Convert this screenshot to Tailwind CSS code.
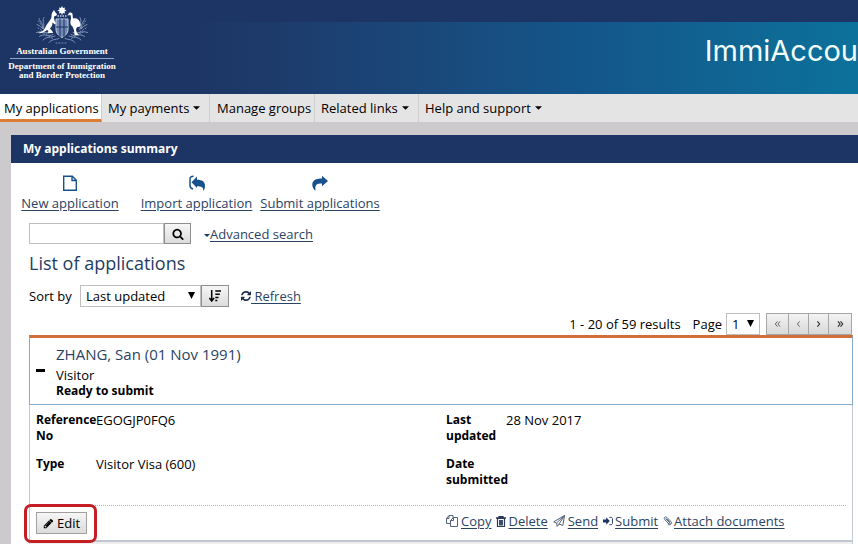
<!DOCTYPE html>
<html lang="en">
<head>
<meta charset="utf-8">
<meta name="viewport" content="width=device-width, initial-scale=1">
<title>My applications summary</title>
<script src="https://cdn.jsdelivr.net/npm/@tailwindcss/browser@4"></script>
</head>
<body class="min-h-screen overflow-x-hidden bg-[#cccacc] font-['Open_Sans',sans-serif] text-[13px] leading-4 text-black">
<header class="flex h-[94px] items-start justify-between bg-[#1d3564]">
  <div class="z-10 flex w-[124px] shrink-0 flex-col items-center pt-[6px] font-['Liberation_Serif',serif] font-bold text-white">
    <svg class="h-[38px] w-[52px]" viewBox="0 0 104 76" fill="none" aria-label="Coat of arms" role="img">
      <g stroke="#7f93ba" stroke-width="2" stroke-linecap="round">
        <path d="M6 25c3 8 9 10 7 20M2 37c7 2 8 8 15 9M16 23c-5 7 2 12-1 21M1 53c12-5 17 4 29 0M7 61c9-8 18 2 27-4M14 68c8-8 14-4 24-8M26 73c6-7 12-5 20-8M98 25c-3 8-9 10-7 20M102 37c-7 2-8 8-15 9M88 23c5 7-2 12 1 21M103 53c-12-5-17 4-29 0M97 61c-9-8-18 2-27-4M90 68c-8-8-14-4-24-8M78 73c-6-7-12-5-20-8"/>
        <path stroke-dasharray="2 4" d="M5 30l12 18M10 52l25 14M99 30L87 48M94 52L69 66M4 44l20 12M100 44L80 56M40 74h24"/>
      </g>
      <path d="M52 0l2 4 4-1-1 4 4 2-4 2 1 4-4-1-2 4-2-4-4 1 1-4-4-2 4-2-1-4 4 1z" fill="#fff"/>
      <path d="M43 20h18" stroke="#cbd5e6" stroke-width="3" stroke-dasharray="3 2"/>
      <path d="M40 26h24v20c0 9-6 14-12 17-6-3-12-8-12-17z" fill="#7288b4" stroke="#c3cee2" stroke-width="2"/>
      <path d="M40 42h24M48 26v36M56 26v36" stroke="#1d3564" stroke-width="2"/>
      <path d="M36 8l3 5 3 3-1 3-5 2c0 6 1 10 4 13l-2 3-5-4c0 6-2 9-5 12l5 6 1 3H23l2-4-3-2c-6 5-10 7-19 6 9-2 13-5 16-12 3-8 9-11 12-19 0-5 0-9 3-12z" fill="#fff"/>
      <path d="M65 16c0-3 4-4 7-2 2 2 1 7 2 11 7-2 13 2 15 11 1 4-2 7-6 6-2 2-3 3-3 6l2 6 4 4h-9l-1-10-3-7c-5-3-5-9-3-15 0-3 0-5-1-8l-6 1z" fill="#fff"/>
    </svg>
    <p class="mt-[1px] text-[9px] leading-3">Australian Government</p>
    <div class="mt-[1px] mb-[3px] h-px w-[104px] bg-[#8ea4c8]"></div>
    <p class="text-center text-[9px] leading-[9px]">Department of Immigration<br>and Border Protection</p>
  </div>
  <div class="mt-[22px] flex h-[72px] flex-1 justify-end overflow-hidden bg-linear-to-r from-[#1d3564] from-10% via-[#145488] via-60% to-[#0b729b] pt-2">
    <h1 class="whitespace-nowrap font-['Inter',sans-serif] text-[29px] leading-[42px] text-[#f2ffff]">ImmiAccou</h1>
  </div>
</header>

<nav class="flex h-7 bg-[#e5e4e5] leading-7" aria-label="Main">
  <a href="#" class="w-[102px] whitespace-nowrap border-r border-b-3 border-r-[#cfcfcf] border-b-[#dc7d35] bg-white pl-1">My applications</a>
  <a href="#" class="flex w-[108px] items-center gap-1 whitespace-nowrap border-r border-[#cfcfcf] pl-[6px]">My payments<svg class="h-1 w-[7px]" viewBox="0 0 8 4"><path d="M0 0h8L4 4z"/></svg></a>
  <a href="#" class="w-[105px] whitespace-nowrap border-r border-[#cfcfcf] pl-[7px]">Manage groups</a>
  <a href="#" class="flex w-[104px] items-center gap-1 whitespace-nowrap border-r border-[#cfcfcf] pl-[6px]">Related links<svg class="h-1 w-[7px]" viewBox="0 0 8 4"><path d="M0 0h8L4 4z"/></svg></a>
  <a href="#" class="flex items-center gap-1 whitespace-nowrap pl-[6px]">Help and support<svg class="h-1 w-[7px]" viewBox="0 0 8 4"><path d="M0 0h8L4 4z"/></svg></a>
</nav>

<main class="mt-[13px] ml-[11px] bg-white">
  <h2 class="h-7 bg-[#1d3564] pl-3 text-[12px] leading-7 font-bold text-white">My applications summary</h2>

  <div class="grid grid-cols-[94px_107px_114px] gap-x-[13px] pt-3 pl-3 leading-5 whitespace-nowrap text-[#2b4363]">
    <a href="#" class="flex flex-col items-center gap-[2px] underline underline-offset-2">
      <svg class="size-4" viewBox="0 0 16 16" fill="none" stroke="#17528c" stroke-width="1.4"><path d="M1.700 1.200h8.600l4 4v10H1.700z M10 1.200v4.300h4.300"/></svg>New application</a>
    <a href="#" class="ml-[13px] flex w-[107px] flex-col items-center gap-[2px] underline underline-offset-2">
      <svg class="size-4" viewBox="0 0 16 16"><path d="M4.500 1.200C2 1.200 1 2 1 4v6.500c0 2 1 3 3 3.500" fill="none" stroke="#17528c" stroke-width="1.500"/><path d="M8 1.500v3.200c5.500 0 8 2 8 6.300 0 1.700-.5 3.300-1.300 4.500-.3.300-.6.200-.5-.2.200-3-1.500-4-6.200-4V13L2.500 7.200z" fill="#17528c"/></svg>Import application</a>
    <a href="#" class="ml-[13px] flex w-[114px] flex-col items-center gap-[2px] underline underline-offset-2">
      <svg class="size-4" viewBox="0 0 16 16" fill="#17528c"><path d="M10 .8L16 6l-6 5.200V8.500C5.500 8.200 3.300 9.500 3.300 13c0 .8.100 1.300.2 2 0 .6-.5.700-.8.200C1.300 13.500.3 12 .3 9.700.3 5.500 3.500 3.500 10 3.500z"/></svg>Submit applications</a>
  </div>

  <div class="px-[18px]">
    <form class="mt-[10px] flex h-[21px] items-stretch" role="search">
      <input type="text" aria-label="Search applications" class="w-[135px] border border-[#bfbfbf] bg-white px-1 outline-none">
      <button type="button" aria-label="Search" class="flex w-[27px] items-center justify-center border border-[#8e8e8e] bg-linear-to-b from-[#f6f6f6] to-[#dcdcdc]">
        <svg class="size-3" viewBox="0 0 1792 1792"><path d="M1216 832q0-185-131.500-316.500t-316.500-131.500-316.500 131.500-131.500 316.500 131.500 316.500 316.500 131.500 316.500-131.500 131.500-316.500zm512 832q0 52-38 90t-90 38q-54 0-90-38l-343-342q-179 124-399 124-143 0-273.500-55.500t-225-150-150-225-55.500-273.500 55.500-273.500 150-225 225-150 273.500-55.500 273.500 55.500 225 150 150 225 55.500 273.500q0 220-124 399l343 343q37 37 37 90z"/></svg>
      </button>
      <a href="#" class="ml-[13px] flex items-center whitespace-nowrap text-[#2b4363] underline underline-offset-2"><svg class="mt-1 h-[3px] w-[6px]" viewBox="0 0 6 3" fill="#1d3564"><path d="M0 0h6L3 3z"/></svg>Advanced search</a>
    </form>

    <h3 class="mt-[5px] text-[18px] leading-7 text-[#1f3d63]">List of applications</h3>

    <div class="mt-2 flex h-[22px] items-stretch">
      <label for="sort" class="w-[51px] leading-[22px]">Sort by</label>
      <div class="relative flex w-[121px]">
        <select id="sort" class="w-full appearance-none border border-[#bfbfbf] bg-white pl-[5px] outline-none"><option>Last updated</option></select>
        <svg class="pointer-events-none absolute top-[7px] right-[6px] h-[7px] w-[7px]" viewBox="0 0 7 7"><path d="M0 0h7L3.500 7z"/></svg>
      </div>
      <button type="button" aria-label="Sort order" class="flex w-7 items-center justify-center border border-[#8e8e8e] bg-linear-to-b from-[#f6f6f6] to-[#dcdcdc]">
        <svg class="size-3" viewBox="0 0 12 12" fill="none" stroke="#000" stroke-width="1.500"><path d="M2.700 0v10.500M.3 8l2.400 3L5.100 8M6.300 1h5.700M6.300 4.200h4.500M6.300 7.400h3.200M6.300 10.600h2"/></svg>
      </button>
      <a href="#" class="ml-3 flex items-center text-[#2b4363]"><svg class="size-[10px]" viewBox="128 128 1536 1536" fill="#1c2f4f"><path d="M1639 1056q0 5-1 7-64 268-268 434.500t-478 166.500q-146 0-282.500-55t-243.500-157l-129 129q-19 19-45 19t-45-19-19-45v-448q0-26 19-45t45-19h448q26 0 45 19t19 45-19 45l-137 137q71 66 161 102t187 36q134 0 250-65t186-179q11-17 53-117 8-23 30-23h192q13 0 22.500 9.500t9.500 22.500zm25-800v448q0 26-19 45t-45 19h-448q-26 0-45-19t-19-45 19-45l138-138q-148-137-349-137-134 0-250 65t-186 179q-11 17-53 117-8 23-30 23h-199q-13 0-22.500-9.500t-9.500-22.500v-7q65-268 270-434.500t480-166.500q146 0 284 55.500t245 156.500l130-129q19-19 45-19t45 19 19 45z"/></svg><span class="whitespace-pre underline underline-offset-2"> Refresh</span></a>
    </div>
  </div>

  <div class="mr-[6px] mt-[6px] flex h-[22px] items-stretch justify-end">
    <p class="mr-3 leading-[22px]">1 - 20 of 59 results</p>
    <label for="page" class="mr-1 leading-[22px]">Page</label>
    <div class="relative mr-[6px] flex w-[34px]">
      <select id="page" class="w-full appearance-none border border-[#bfbfbf] bg-white pl-[5px] outline-none"><option>1</option></select>
      <svg class="pointer-events-none absolute top-[7px] right-[6px] h-[7px] w-[7px]" viewBox="0 0 7 7"><path d="M0 0h7L3.500 7z"/></svg>
    </div>
    <button type="button" aria-label="First page" class="flex w-[23px] items-center justify-center border border-[#a6a6a6] bg-linear-to-b from-[#f3f3f3] to-[#d9d9d9]"><svg class="h-[6px] w-[7px]" viewBox="0 0 8 8" fill="none" stroke="#555" stroke-width="1.200"><path d="M4 .5L1 4l3 3.500M7.500.5L4.500 4l3 3.500"/></svg></button>
    <button type="button" aria-label="Previous page" class="flex w-5 items-center justify-center border border-l-0 border-[#a6a6a6] bg-linear-to-b from-[#f3f3f3] to-[#d9d9d9]"><svg class="h-[6px] w-[7px]" viewBox="0 0 8 8" fill="none" stroke="#555" stroke-width="1.200"><path d="M5.500.5L2.500 4l3 3.500"/></svg></button>
    <button type="button" aria-label="Next page" class="flex w-5 items-center justify-center border border-l-0 border-[#a6a6a6] bg-linear-to-b from-[#f3f3f3] to-[#d9d9d9]"><svg class="h-[6px] w-[7px]" viewBox="0 0 8 8" fill="none" stroke="#222" stroke-width="1.400"><path d="M2.500.5L5.500 4l-3 3.500"/></svg></button>
    <button type="button" aria-label="Last page" class="flex w-[23px] items-center justify-center border border-l-0 border-[#a6a6a6] bg-linear-to-b from-[#f3f3f3] to-[#d9d9d9]"><svg class="h-[6px] w-[7px]" viewBox="0 0 8 8" fill="none" stroke="#222" stroke-width="1.400"><path d="M.5.5L3.500 4l-3 3.500M4 .5L7 4 4 7.500"/></svg></button>
  </div>

  <article class="mr-[5px] ml-[18px]">
    <div class="flex items-center border border-t-3 border-[#86aace] border-t-[#cf6f3c] pt-1 pb-[5px] pl-[6px]">
      <button type="button" aria-label="Collapse" class="flex h-4 w-5 items-center"><span class="h-[3px] w-[9px] bg-black"></span></button>
      <div>
        <h4 class="text-[15px] leading-6 text-[#2b4363]">ZHANG, San (01 Nov 1991)</h4>
        <p class="mt-[1px]">Visitor</p>
        <p class="text-[12px] leading-4 font-bold">Ready to submit</p>
      </div>
    </div>
    <div class="border border-t-0 border-[#c3c7cf] px-[6px] pt-[7px]">
      <dl class="grid grid-cols-[60px_350px_60px_1fr] gap-y-3 pb-[17px]">
        <dt class="text-[12px] leading-4 font-bold">Reference No</dt><dd>EGOGJP0FQ6</dd>
        <dt class="text-[12px] leading-4 font-bold">Last updated</dt><dd>28 Nov 2017</dd>
        <dt class="text-[12px] leading-4 font-bold">Type</dt><dd>Visitor Visa (600)</dd>
        <dt class="text-[12px] leading-4 font-bold">Date submitted</dt><dd></dd>
      </dl>
      <div class="grid grid-cols-[410px_1fr] border-t border-dotted border-[#b5b5b5] pt-[6px] pb-[6px]">
        <div class="relative w-[51px]">
          <button type="button" class="flex h-[22px] w-full items-center justify-center gap-[3px] border border-[#a0a0a0] bg-linear-to-b from-[#f6f6f6] to-[#dcdcdc]"><svg class="size-[11px]" viewBox="0 0 1792 1792"><path d="M491 1536l91-91-235-235-91 91v107h128v128h107zm523-928q0-22-22-22-10 0-17 7l-542 542q-7 7-7 17 0 22 22 22 10 0 17-7l542-542q7-7 7-17zm-54-192l416 416-832 832h-416v-416zm683 96q0 53-37 90l-166 166-416-416 166-165q36-38 90-38 53 0 91 38l235 234q37 39 37 91z"/></svg>Edit</button>
          <span class="pointer-events-none absolute -top-[8px] -left-[12px] h-[39px] w-[73px] rounded-[7px] border-3 border-[#c41e24]"></span>
        </div>
        <div class="flex h-[18px] items-center gap-[5px] whitespace-nowrap text-[#2b4363]">
          <a href="#" class="flex items-center gap-[3px]"><svg class="size-3" viewBox="0 0 12 12" fill="none" stroke="#53627a"><path d="M4.500 8.500h-4V3.500l2.500-3h4V3M3 .5v3H.5M7.500 2.500h4v9h-7v-6zM7.500 2.500v3h-3"/></svg><span class="underline underline-offset-2">Copy</span></a>
          <a href="#" class="flex items-center gap-[2px]"><svg class="h-[11px] w-[10px]" viewBox="0 0 10 11" fill="none" stroke="#2b3a58"><path d="M0 2h10M3 2V.5h4V2" stroke-width="1.300"/><path d="M1.500 2.500v8h7v-8zM3.700 4v5.500M6.300 4v5.500M5 4v5.500" stroke-width="1.200"/></svg><span class="underline underline-offset-2">Delete</span></a>
          <a href="#" class="flex items-center gap-[3px]"><svg class="size-3" viewBox="0 0 12 12" fill="none" stroke="#53627a" stroke-linejoin="round"><path d="M11.500.5L.7 6.800l2.800 1.200L11.500.5 9.800 10.500 6 9l-1.800 2.500L3.700 8M11.500.5L6 9"/></svg><span class="underline underline-offset-2">Send</span></a>
          <a href="#" class="flex items-center gap-[2px]"><svg class="h-3 w-[10px]" viewBox="0 0 11 12"><path d="M0 4.300h3.500V2L7.500 6l-4 4V7.700H0z" fill="#1d3564"/><path d="M7 2h1.700C9.800 2 10.400 2.600 10.400 3.600v4.800c0 1-.6 1.600-1.700 1.600H7" fill="none" stroke="#1d3564"/></svg><span class="underline underline-offset-2">Submit</span></a>
          <a href="#" class="flex items-center gap-[2px]"><svg class="h-[10px] w-[9px]" viewBox="-1 0 11 12" fill="none" stroke="#53627a" stroke-width="1.200" stroke-linecap="round"><path d="M2.500 3.500l5 5c1 1-.2 2-1.100 1.200L1.200 4.400C-.8 2.200 1.800-.2 4 1.800l4.500 4.600c2.300 2.700-.6 6-3.500 3.500M3.500 3.300l3.700 3.800"/></svg><span class="underline underline-offset-2">Attach documents</span></a>
        </div>
      </div>
    </div>
    <div class="h-[3px] border-x border-[#c3c7cf] border-t bg-[#eeeeee]"></div>
  </article>
</main>
</body>
</html>
